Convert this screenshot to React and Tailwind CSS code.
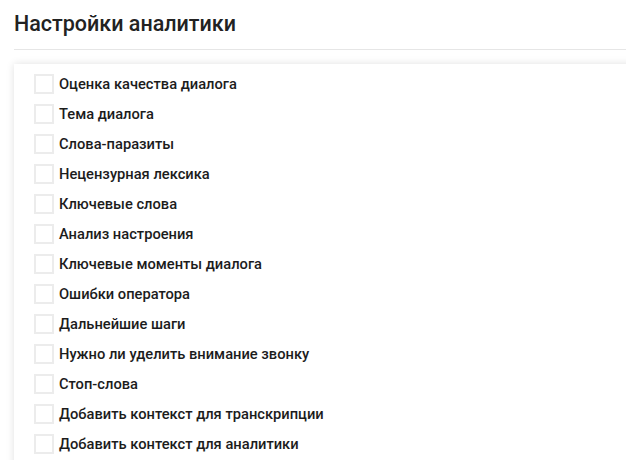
const options = [
  'Оценка качества диалога',
  'Тема диалога',
  'Слова-паразиты',
  'Нецензурная лексика',
  'Ключевые слова',
  'Анализ настроения',
  'Ключевые моменты диалога',
  'Ошибки оператора',
  'Дальнейшие шаги',
  'Нужно ли уделить внимание звонку',
  'Стоп-слова',
  'Добавить контекст для транскрипции',
  'Добавить контекст для аналитики',
];

export default function App() {
  return (
    <div className="w-[626px] h-[460px] overflow-hidden bg-white pl-[14px] font-['Roboto',sans-serif] text-[#1c1c1c]">
      <h1 className="pt-[11px] h-[49px] text-[21.5px] font-medium leading-[26px] text-[#222]">Настройки аналитики</h1>
      <div className="h-px bg-[#e6e6e6]" />
      <div className="mt-[14px] w-[640px] bg-white shadow-[0_0_8px_rgba(0,0,0,0.12)] pl-[20px] pt-[5px] pb-[20px]">
        {options.map(label => (
          <label key={label} className="flex items-center gap-[5px] h-[30px]">
            <span className="w-[20px] h-[20px] shrink-0 border-2 border-[#ececec] bg-white" />
            <span className="text-[14.7px] font-medium leading-none">{label}</span>
          </label>
        ))}
      </div>
    </div>
  );
}
